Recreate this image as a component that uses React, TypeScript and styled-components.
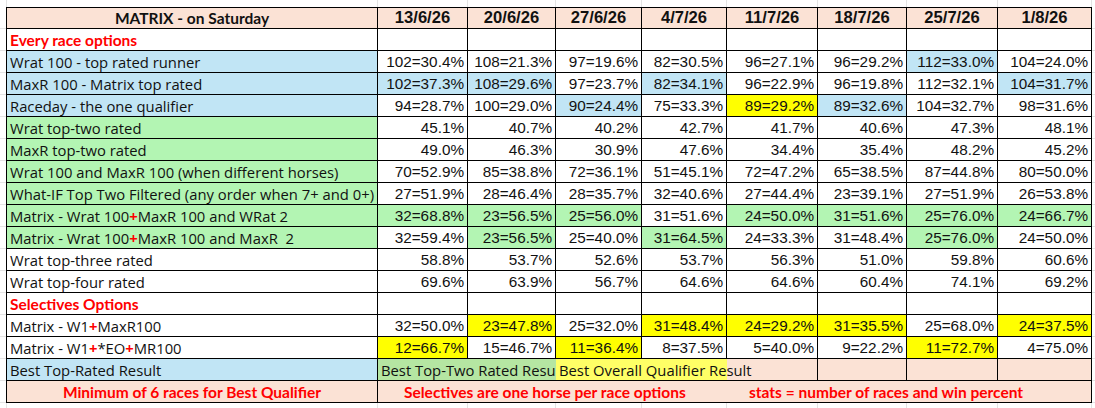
import React from 'react';
import styled, { createGlobalStyle } from 'styled-components';

type Tone = 'white' | 'blue' | 'green' | 'yellow' | 'peach' | 'paleGreen' | 'paleYellow';

const tones: Record<Tone, string> = {
  white: '#ffffff',
  blue: '#c1e5f5',
  green: '#b3f5b3',
  yellow: '#ffff00',
  peach: '#fbe2d5',
  paleGreen: '#b5e6a2',
  paleYellow: '#ffff66',
};

const COLS = '371px 90px 88px 86px 85px 91px 89px 91px 94px';
const LABEL_FONT = '"Open Sans", "Liberation Sans", sans-serif';
const BOLD_FONT = 'Lato, "Open Sans", sans-serif';
const NUMBER_FONT = '"Liberation Sans", Arial, sans-serif';

const GlobalStyle = createGlobalStyle`
  html, body {
    margin: 0;
    padding: 0;
    background: #ffffff;
  }
  body {
    font-family: ${LABEL_FONT};
    color: #000;
  }
`;

const Sheet = styled.div`
  width: 1095px;
  height: 408px;
  overflow: hidden;
  box-sizing: border-box;
  padding-left: 6px;
  background-image: repeating-linear-gradient(
    to bottom,
    transparent 0,
    transparent 21px,
    #e3e3e3 21px,
    #e3e3e3 22px
  );
  background-position: 0 7px;
`;

const Gutter = styled.div<{ $h: number }>`
  display: grid;
  grid-template-columns: ${COLS};
  height: ${p => p.$h}px;
  border-left: 1px solid #e3e3e3;
  width: max-content;
`;

const GutterCell = styled.div`
  border-right: 1px solid #e3e3e3;
`;

const Table = styled.div`
  display: grid;
  grid-template-columns: ${COLS};
  grid-template-rows: 21px;
  grid-auto-rows: 22px;
  border-top: 1px solid #000;
  border-left: 1px solid #000;
  width: max-content;
  background: #fff;
`;

const BaseCell = styled.div<{ $tone?: Tone }>`
  box-sizing: border-box;
  display: flex;
  align-items: center;
  padding: 0 3px;
  background: ${p => tones[p.$tone ?? 'white']};
  border-right: 1px solid #000;
  border-bottom: 1px solid #000;
  white-space: nowrap;
  overflow: hidden;
`;

const TitleCell = styled(BaseCell)`
  justify-content: center;
  font-family: ${BOLD_FONT};
  font-weight: 700;
  font-size: 15.5px;
  color: #111;
`;

const DateCell = styled(BaseCell)`
  justify-content: center;
  font-family: ${NUMBER_FONT};
  font-weight: 700;
  font-size: 16.6px;
  color: #111;
`;

const LabelCell = styled(BaseCell)`
  font-family: ${LABEL_FONT};
  font-size: 14.8px;
  color: #111;
`;

const SectionCell = styled(BaseCell)`
  font-family: ${BOLD_FONT};
  font-weight: 700;
  font-size: 15.5px;
  color: #ff0000;
`;

const ValueCell = styled(BaseCell)`
  justify-content: flex-end;
  font-family: ${NUMBER_FONT};
  font-size: 15.3px;
  color: #111;
`;

const SpanCell = styled(BaseCell)<{ $span: number; $overflow?: boolean }>`
  grid-column: span ${p => p.$span};
  border-right: none;
  font-family: ${LABEL_FONT};
  font-size: 14.8px;
  color: #111;
  ${p =>
    p.$overflow &&
    `
    overflow: visible;
    position: relative;
    z-index: 1;
  `}
`;

const NoteCell = styled(BaseCell)`
  justify-content: center;
  font-family: ${BOLD_FONT};
  font-weight: 700;
  font-size: 15.5px;
  color: #ff0000;
`;

const WideNoteCell = styled(BaseCell)`
  grid-column: span 8;
  padding: 0;
  font-family: ${BOLD_FONT};
  font-weight: 700;
  font-size: 15.5px;
  color: #ff0000;
`;

const NoteText = styled.span<{ $width: number; $indent: number }>`
  display: inline-block;
  width: ${p => p.$width}px;
  padding-left: ${p => p.$indent}px;
  box-sizing: border-box;
`;

const Plus = styled.span`
  color: #ff0000;
  font-weight: 700;
`;

const dates = ['13/6/26', '20/6/26', '27/6/26', '4/7/26', '11/7/26', '18/7/26', '25/7/26', '1/8/26'];

type Row = {
  label: React.ReactNode;
  tone: Tone;
  values: string[];
  marks?: Record<number, Tone>;
};

const everyRace: Row[] = [
  {
    label: 'Wrat 100 - top rated runner',
    tone: 'blue',
    values: ['102=30.4%', '108=21.3%', '97=19.6%', '82=30.5%', '96=27.1%', '96=29.2%', '112=33.0%', '104=24.0%'],
    marks: { 6: 'blue' },
  },
  {
    label: 'MaxR 100 - Matrix top rated',
    tone: 'blue',
    values: ['102=37.3%', '108=29.6%', '97=23.7%', '82=34.1%', '96=22.9%', '96=19.8%', '112=32.1%', '104=31.7%'],
    marks: { 0: 'blue', 1: 'blue', 3: 'blue', 7: 'blue' },
  },
  {
    label: 'Raceday - the one qualifier',
    tone: 'blue',
    values: ['94=28.7%', '100=29.0%', '90=24.4%', '75=33.3%', '89=29.2%', '89=32.6%', '104=32.7%', '98=31.6%'],
    marks: { 2: 'blue', 4: 'yellow', 5: 'blue' },
  },
  {
    label: 'Wrat top-two rated',
    tone: 'green',
    values: ['45.1%', '40.7%', '40.2%', '42.7%', '41.7%', '40.6%', '47.3%', '48.1%'],
  },
  {
    label: 'MaxR top-two rated',
    tone: 'green',
    values: ['49.0%', '46.3%', '30.9%', '47.6%', '34.4%', '35.4%', '48.2%', '45.2%'],
  },
  {
    label: 'Wrat 100 and MaxR 100 (when different horses)',
    tone: 'green',
    values: ['70=52.9%', '85=38.8%', '72=36.1%', '51=45.1%', '72=47.2%', '65=38.5%', '87=44.8%', '80=50.0%'],
  },
  {
    label: 'What-IF Top Two Filtered (any order when 7+ and 0+)',
    tone: 'green',
    values: ['27=51.9%', '28=46.4%', '28=35.7%', '32=40.6%', '27=44.4%', '23=39.1%', '27=51.9%', '26=53.8%'],
  },
  {
    label: (
      <>
        Matrix - Wrat 100<Plus>+</Plus>MaxR 100 and WRat 2
      </>
    ),
    tone: 'green',
    values: ['32=68.8%', '23=56.5%', '25=56.0%', '31=51.6%', '24=50.0%', '31=51.6%', '25=76.0%', '24=66.7%'],
    marks: { 0: 'green', 1: 'green', 2: 'green', 4: 'green', 5: 'green', 6: 'green', 7: 'green' },
  },
  {
    label: (
      <>
        Matrix - Wrat 100<Plus>+</Plus>MaxR 100 and MaxR&nbsp; 2
      </>
    ),
    tone: 'green',
    values: ['32=59.4%', '23=56.5%', '25=40.0%', '31=64.5%', '24=33.3%', '31=48.4%', '25=76.0%', '24=50.0%'],
    marks: { 1: 'green', 3: 'green', 6: 'green' },
  },
  {
    label: 'Wrat top-three rated',
    tone: 'white',
    values: ['58.8%', '53.7%', '52.6%', '53.7%', '56.3%', '51.0%', '59.8%', '60.6%'],
  },
  {
    label: 'Wrat top-four rated',
    tone: 'white',
    values: ['69.6%', '63.9%', '56.7%', '64.6%', '64.6%', '60.4%', '74.1%', '69.2%'],
  },
];

const selectives: Row[] = [
  {
    label: (
      <>
        Matrix - W1<Plus>+</Plus>MaxR100
      </>
    ),
    tone: 'white',
    values: ['32=50.0%', '23=47.8%', '25=32.0%', '31=48.4%', '24=29.2%', '31=35.5%', '25=68.0%', '24=37.5%'],
    marks: { 1: 'yellow', 3: 'yellow', 4: 'yellow', 5: 'yellow', 7: 'yellow' },
  },
  {
    label: (
      <>
        Matrix - W1<Plus>+</Plus>*EO<Plus>+</Plus>MR100
      </>
    ),
    tone: 'white',
    values: ['12=66.7%', '15=46.7%', '11=36.4%', '8=37.5%', '5=40.0%', '9=22.2%', '11=72.7%', '4=75.0%'],
    marks: { 0: 'yellow', 2: 'yellow', 6: 'yellow' },
  },
];

const DataRow: React.FC<{ row: Row }> = ({ row }) => (
  <>
    <LabelCell $tone={row.tone}>{row.label}</LabelCell>
    {row.values.map((v, i) => (
      <ValueCell key={i} $tone={row.marks?.[i] ?? 'white'}>
        {v}
      </ValueCell>
    ))}
  </>
);

const SectionRow: React.FC<{ title: string }> = ({ title }) => (
  <>
    <SectionCell>{title}</SectionCell>
    {dates.map(d => (
      <BaseCell key={d} />
    ))}
  </>
);

const GutterStrip: React.FC<{ h: number }> = ({ h }) => (
  <Gutter $h={h}>
    {Array.from({ length: 9 }).map((_, i) => (
      <GutterCell key={i} />
    ))}
  </Gutter>
);

const App: React.FC = () => (
  <>
    <GlobalStyle />
    <Sheet>
      <GutterStrip h={7} />
      <Table>
        <TitleCell $tone="peach">MATRIX - on Saturday</TitleCell>
        {dates.map(d => (
          <DateCell key={d} $tone="peach">
            {d}
          </DateCell>
        ))}

        <SectionRow title="Every race options" />
        {everyRace.map((r, i) => (
          <DataRow key={i} row={r} />
        ))}

        <SectionRow title="Selectives Options" />
        {selectives.map((r, i) => (
          <DataRow key={i} row={r} />
        ))}

        <LabelCell $tone="blue">Best Top-Rated Result</LabelCell>
        <SpanCell $span={2} $tone="paleGreen">Best Top-Two Rated Result</SpanCell>
        <SpanCell $span={2} $tone="paleYellow" $overflow>
          Best Overall Qualifier Result
        </SpanCell>
        <BaseCell $tone="peach" />
        <BaseCell $tone="peach" />
        <BaseCell $tone="peach" />
        <BaseCell $tone="peach" />

        <NoteCell $tone="peach">Minimum of 6 races for Best Qualifier</NoteCell>
        <WideNoteCell $tone="peach">
          <NoteText $width={350} $indent={26}>
            Selectives are one horse per race options
          </NoteText>
          <NoteText $width={360} $indent={21}>
            stats = number of races and win percent
          </NoteText>
        </WideNoteCell>
      </Table>
      <GutterStrip h={6} />
    </Sheet>
  </>
);

export default App;
